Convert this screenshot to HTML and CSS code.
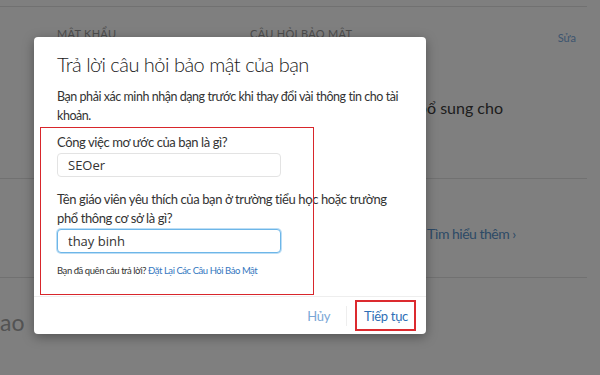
FILE: index.html
```html
<!DOCTYPE html>
<html lang="vi">
<head>
  <meta charset="utf-8">
  <title>Câu hỏi bảo mật</title>
  <link rel="stylesheet" href="styles.css">
</head>
<body>
  <!-- Account page behind the modal -->
  <div class="page">
    <div class="top-rule"></div>

    <div class="security-row">
      <div class="field">
        <p class="field-label">Mật khẩu</p>
      </div>
      <div class="field">
        <p class="field-label">Câu hỏi bảo mật</p>
        <p class="field-text">Dùng câu hỏi để bổ sung cho</p>
      </div>
      <a class="edit-link" href="#">Sửa</a>
    </div>

    <div class="info-row">
      <a class="more-link" href="#">Tìm hiểu thêm ›</a>
    </div>

    <h2 class="section-title">ao</h2>
  </div>

  <!-- Modal -->
  <div class="overlay">
    <div class="dialog">
      <div class="dialog-body">
        <h1 class="dialog-title">Trả lời câu hỏi bảo mật của bạn</h1>
        <p class="dialog-intro">Bạn phải xác minh nhận dạng trước khi thay đổi vài thông tin cho tài khoản.</p>

        <div class="questions">
          <div class="question">
            <label for="q1">Công việc mơ ước của bạn là gì?</label>
            <input type="text" id="q1" value="SEOer">
          </div>
          <div class="question">
            <label for="q2">Tên giáo viên yêu thích của bạn ở trường tiểu học hoặc trường phổ thông cơ sở là gì?</label>
            <input type="text" id="q2" class="focused" value="thay binh">
          </div>
          <p class="forgot">Bạn đã quên câu trả lời? <a href="#">Đặt Lại Các Câu Hỏi Bảo Mật</a></p>
          <div class="mark mark-questions"></div>
        </div>
      </div>

      <div class="dialog-footer">
        <button class="btn btn-cancel">Hủy</button>
        <span class="btn-sep"></span>
        <button class="btn btn-primary">Tiếp tục</button>
      </div>
    </div>
  </div>
</body>
</html>
```

FILE: styles.css
```css
/* Base */
body {
  margin: 0;
  width: 600px;
  height: 375px;
  overflow: hidden;
  position: relative;
  background: #ffffff;
  font-family: 'Lato', 'Open Sans', sans-serif;
  color: #333333;
}

p {
  margin: 0;
}

a {
  text-decoration: none;
}

/* Page behind the modal */
.page {
  width: 587px;
}

.top-rule {
  height: 6px;
  border-bottom: 1px solid #e2e2e2;
}

.security-row {
  display: grid;
  grid-template-columns: 193px 1fr auto;
  height: 171px;
  padding-left: 57px;
  padding-right: 11px;
  border-bottom: 1px solid #e2e2e2;
}

.field {
  padding-top: 20px;
  min-width: 0;
}

.field-label {
  font-size: 11px;
  letter-spacing: 0.3px;
  text-transform: uppercase;
  color: #999999;
}

.field-text {
  width: 253px;
  margin-top: 58px;
  font-size: 16px;
  white-space: nowrap;
  text-align: right;
  color: #3c3c3c;
}

.edit-link {
  padding-top: 24px;
  font-size: 11px;
  color: #7aaade;
}

.info-row {
  height: 99px;
  border-bottom: 1px solid #e2e2e2;
  padding-left: 427px;
  padding-top: 44px;
  box-sizing: border-box;
}

.more-link {
  font-size: 14px;
  letter-spacing: -0.5px;
  color: #5b95cd;
}

.section-title {
  margin: 30px 0 0;
  font-size: 23px;
  font-weight: 400;
  color: #a6a6a6;
}

/* Modal */
.overlay {
  position: absolute;
  inset: 0;
  background: rgba(0, 0, 0, 0.5);
  padding: 37px 0 0 34px;
}

.dialog {
  width: 392px;
  height: 297px;
  background: #ffffff;
  border-radius: 4px;
  box-shadow: 0 3px 12px rgba(0, 0, 0, 0.35);
  display: flex;
  flex-direction: column;
}

.dialog-body {
  flex: 1;
  padding: 13px 23px 0;
}

.dialog-title {
  margin: 0 0 9px;
  font-size: 20px;
  font-weight: 300;
  letter-spacing: -0.5px;
  color: #1a1a1a;
  line-height: 28px;
}

.dialog-intro {
  font-size: 12.5px;
  letter-spacing: -0.45px;
  line-height: 19px;
  color: #333333;
}

/* Questions */
.questions {
  position: relative;
  margin-top: 8px;
}

.question {
  margin-bottom: 13px;
}

.question label {
  display: block;
  font-size: 13px;
  letter-spacing: -0.4px;
  line-height: 19px;
  margin-bottom: 1px;
}

.question input {
  display: block;
  width: 224px;
  height: 24px;
  box-sizing: border-box;
  padding: 0 10px;
  border: 1px solid #e3e3e3;
  border-radius: 4px;
  font-family: 'Open Sans', sans-serif;
  font-size: 13px;
  color: #333333;
  background: #ffffff;
}

.question input.focused {
  border-color: #6db6e8;
  box-shadow: 0 0 0 1px rgba(109, 182, 232, 0.45);
  outline: none;
}

.forgot {
  font-size: 9.5px;
  letter-spacing: -0.45px;
  margin-top: -1px;
  color: #333333;
}

.forgot a {
  color: #3477c0;
}

/* Red annotation marks */
.mark {
  position: absolute;
  border: 1.5px solid #d8262b;
  box-sizing: border-box;
}

.mark-questions {
  left: -17px;
  top: -6px;
  width: 274px;
  height: 168px;
}

/* Footer */
.dialog-footer {
  display: flex;
  align-items: center;
  justify-content: flex-end;
  height: 37px;
  padding-right: 10px;
  border-top: 1px solid #eeeeee;
}

.btn {
  background: none;
  border: none;
  font-family: 'Lato', 'Open Sans', sans-serif;
  font-size: 13px;
  letter-spacing: -0.3px;
  cursor: pointer;
  padding: 0;
}

.btn-cancel {
  color: #79a6d6;
}

.btn-sep {
  width: 1px;
  height: 20px;
  background: #eeeeee;
  margin: 0 8px 0 16px;
}

.btn.btn-primary {
  color: #2f6fb6;
  height: 31px;
  padding: 0 6px 0 7px;
  border: 2px solid #dc2a2f;
}
```
